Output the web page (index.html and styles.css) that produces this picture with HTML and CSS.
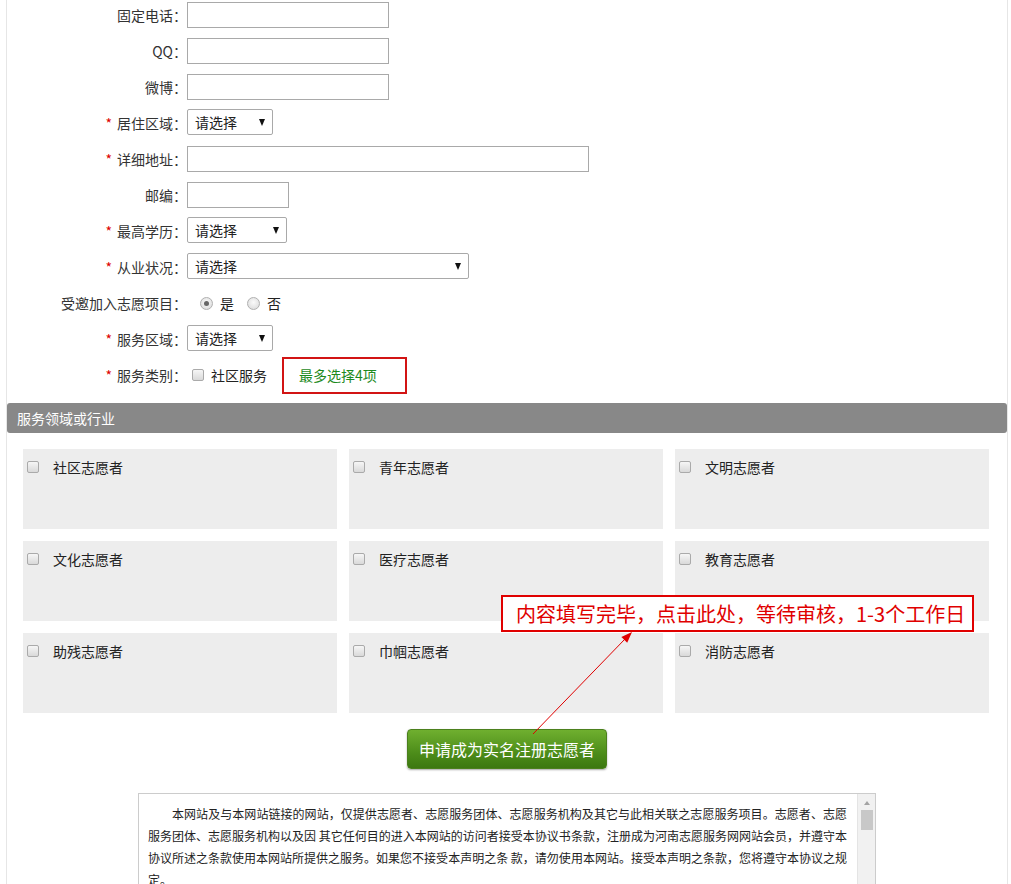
FILE: index.html
```html
<!DOCTYPE html>
<html lang="zh-CN">
<head>
<meta charset="utf-8">
<title>注册志愿者</title>
<link rel="stylesheet" href="styles.css">
</head>
<body>
<div class="page">
  <div class="form">
    <div class="row"><label class="label">固定电话：</label><input class="txt w202" type="text"></div>
    <div class="row"><label class="label">QQ：</label><input class="txt w202" type="text"></div>
    <div class="row"><label class="label">微博：</label><input class="txt w202" type="text"></div>
    <div class="row"><label class="label"><span class="req">*</span>居住区域：</label><div class="select w86"><span>请选择</span><i class="caret"></i></div></div>
    <div class="row"><label class="label"><span class="req">*</span>详细地址：</label><input class="txt w402" type="text"></div>
    <div class="row"><label class="label">邮编：</label><input class="txt w102" type="text"></div>
    <div class="row"><label class="label"><span class="req">*</span>最高学历：</label><div class="select w100"><span>请选择</span><i class="caret"></i></div></div>
    <div class="row"><label class="label"><span class="req">*</span>从业状况：</label><div class="select w282"><span>请选择</span><i class="caret"></i></div></div>
    <div class="row"><label class="label">受邀加入志愿项目：</label><span class="radio checked first"></span><span class="opt">是</span><span class="radio"></span><span class="opt">否</span></div>
    <div class="row"><label class="label"><span class="req">*</span>服务区域：</label><div class="select w86"><span>请选择</span><i class="caret"></i></div></div>
    <div class="row"><label class="label"><span class="req">*</span>服务类别：</label><span class="chk small"></span><span class="chk-text">社区服务</span><div class="limit">最多选择4项</div></div>
  </div>

  <div class="bar">服务领域或行业</div>

  <div class="grid">
    <div class="cell"><span class="chk"></span><span class="cell-text">社区志愿者</span></div>
    <div class="cell"><span class="chk"></span><span class="cell-text">青年志愿者</span></div>
    <div class="cell"><span class="chk"></span><span class="cell-text">文明志愿者</span></div>
    <div class="cell"><span class="chk"></span><span class="cell-text">文化志愿者</span></div>
    <div class="cell"><span class="chk"></span><span class="cell-text">医疗志愿者</span></div>
    <div class="cell"><span class="chk"></span><span class="cell-text">教育志愿者</span></div>
    <div class="cell"><span class="chk"></span><span class="cell-text">助残志愿者</span></div>
    <div class="cell"><span class="chk"></span><span class="cell-text">巾帼志愿者</span></div>
    <div class="cell"><span class="chk"></span><span class="cell-text">消防志愿者</span></div>
  </div>

  <div class="actions"><button class="apply" type="button">申请成为实名注册志愿者</button></div>

  <div class="agreement">
    <div class="agree-text">
      <div class="agree-main">本网站及与本网站链接的网站，仅提供志愿者、志愿服务团体、志愿服务机构及其它与此相关联之志愿服务项目。志愿者、志愿服务团体、志愿服务机构以及因 其它任何目的进入本网站的访问者接受本协议书条款，注册成为河南志愿服务网网站会员，并遵守本协议所述之条款使用本网站所提供之服务。如果您不接受本声明之条 款，请勿使用本网站。接受本声明之条款，您将遵守本协议之规</div>
      <div class="agree-end">定。</div>
    </div>
    <div class="sbar"><i class="sbar-up"></i><i class="sbar-thumb"></i></div>
  </div>

  <div class="note">内容填写完毕，点击此处，等待审核，1-3个工作日</div>
  <svg class="arrow" width="1000" height="900" viewBox="0 0 1000 900">
    <line x1="526" y1="737" x2="618" y2="642" stroke="#e00000" stroke-width="1"/>
    <polygon points="625,635 620.2,645.7 614.4,640.1" fill="#e00000"/>
  </svg>
</div>
</body>
</html>
```

FILE: styles.css
```css
html, body {
  margin: 0;
  padding: 0;
  overflow: hidden;
  background: #fff;
}
body {
  font-family: "Noto Sans CJK SC", "Noto Sans", sans-serif;
  font-size: 14px;
  color: #333;
}
.page {
  position: relative;
  margin: -3px 0 0 6px;
  width: 1000px;
  border-left: 1px solid #e6e6e6;
  border-right: 1px solid #e6e6e6;
  padding-bottom: 200px;
}
.form {
  padding-bottom: 10px;
}
.row {
  display: flex;
  align-items: center;
  height: 36px;
}
.label {
  width: 180px;
  flex: none;
  text-align: right;
  white-space: nowrap;
  color: #333;
}
.req {
  color: #d00;
  margin-right: 5px;
}
.txt {
  box-sizing: border-box;
  height: 26px;
  margin: 0;
  border: 1px solid #a9a9a9;
  background: #fff;
  padding: 0 4px;
}
.w202 { width: 202px; }
.w402 { width: 402px; }
.w102 { width: 102px; }
.w86 { width: 86px; }
.w100 { width: 100px; }
.w282 { width: 282px; }
.select {
  box-sizing: border-box;
  height: 26px;
  margin-bottom: 2px;
  border: 1px solid #a9a9a9;
  border-radius: 2px;
  background: #fff;
  display: flex;
  align-items: center;
  justify-content: space-between;
  padding-left: 7px;
  color: #222;
}
.caret {
  width: 0;
  height: 0;
  border-left: 3px solid transparent;
  border-right: 3px solid transparent;
  border-top: 7px solid #111;
  margin-right: 7px;
}
.radio {
  box-sizing: border-box;
  width: 13px;
  height: 13px;
  border-radius: 50%;
  border: 1px solid #b0b0b0;
  background: radial-gradient(circle at 50% 40%, #fafafa 0%, #dedede 80%);
  margin-left: 13px;
  display: flex;
  align-items: center;
  justify-content: center;
}
.radio.checked::after {
  content: "";
  width: 5px;
  height: 5px;
  border-radius: 50%;
  background: #666;
}
.opt {
  margin-left: 7px;
  color: #222;
}
.chk {
  box-sizing: border-box;
  width: 12px;
  height: 12px;
  border: 1px solid #aaa;
  border-radius: 2px;
  background: linear-gradient(#f6f6f6, #d9d9d9);
  flex: none;
}
.chk.small { margin-left: 5px; }
.chk-text {
  margin-left: 7px;
  color: #222;
}
.limit {
  box-sizing: border-box;
  margin-left: 15px;
  width: 125px;
  height: 37px;
  border: 2px solid #d21414;
  color: #1d8a1d;
  padding-left: 15px;
  display: flex;
  align-items: center;
}
.bar {
  height: 30px;
  line-height: 30px;
  background: #888;
  color: #fff;
  border-radius: 3px;
  padding-left: 10px;
}
.grid {
  display: grid;
  grid-template-columns: repeat(3, 314px);
  grid-auto-rows: 80px;
  gap: 12px;
  padding: 16px 0 0 16px;
}
.cell {
  background: #ededed;
  display: flex;
  align-items: flex-start;
  padding: 11px 0 0 4px;
}
.cell .chk { margin-top: 1px; }
.cell-text {
  margin-left: 14px;
  line-height: 14px;
  color: #222;
}
.actions {
  display: flex;
  justify-content: center;
  padding-top: 16px;
}
.apply {
  box-sizing: border-box;
  width: 200px;
  height: 40px;
  border: 1px solid #4b801d;
  border-radius: 4px;
  background: linear-gradient(#6faf2f, #4d8d1a 60%, #3c7810);
  box-shadow: 0 1px 2px rgba(0,0,0,0.35);
  color: #fff;
  font-family: "Noto Sans CJK SC", sans-serif;
  font-size: 16px;
  padding: 0;
}
.agreement {
  margin: 24px auto 0;
  width: 738px;
  box-sizing: border-box;
  height: 140px;
  border: 1px solid #ccc;
  display: flex;
  overflow: hidden;
}
.agree-text {
  flex: 1;
  padding: 9px 10px 0 9px;
  font-size: 12px;
  line-height: 22px;
  color: #222;
}
.agree-main {
  text-indent: 2em;
  text-align: justify;
  text-align-last: justify;
}
.sbar {
  width: 17px;
  flex: none;
  background: #f1f1f1;
  border-left: 1px solid #e4e4e4;
  display: flex;
  flex-direction: column;
  align-items: center;
}
.sbar-up {
  margin-top: 7px;
  width: 0;
  height: 0;
  border-left: 3px solid transparent;
  border-right: 3px solid transparent;
  border-bottom: 4px solid #a3a3a3;
}
.sbar-thumb {
  margin-top: 5px;
  width: 12px;
  height: 20px;
  background: #c8c8c8;
}
.note {
  position: absolute;
  left: 494px;
  top: 598px;
  box-sizing: border-box;
  width: 473px;
  height: 37px;
  border: 2px solid #e00000;
  background: #fff;
  color: #e00000;
  font-size: 20px;
  line-height: 33px;
  padding-left: 13px;
  white-space: nowrap;
}
.arrow {
  position: absolute;
  left: 0;
  top: 0;
  pointer-events: none;
}
```
